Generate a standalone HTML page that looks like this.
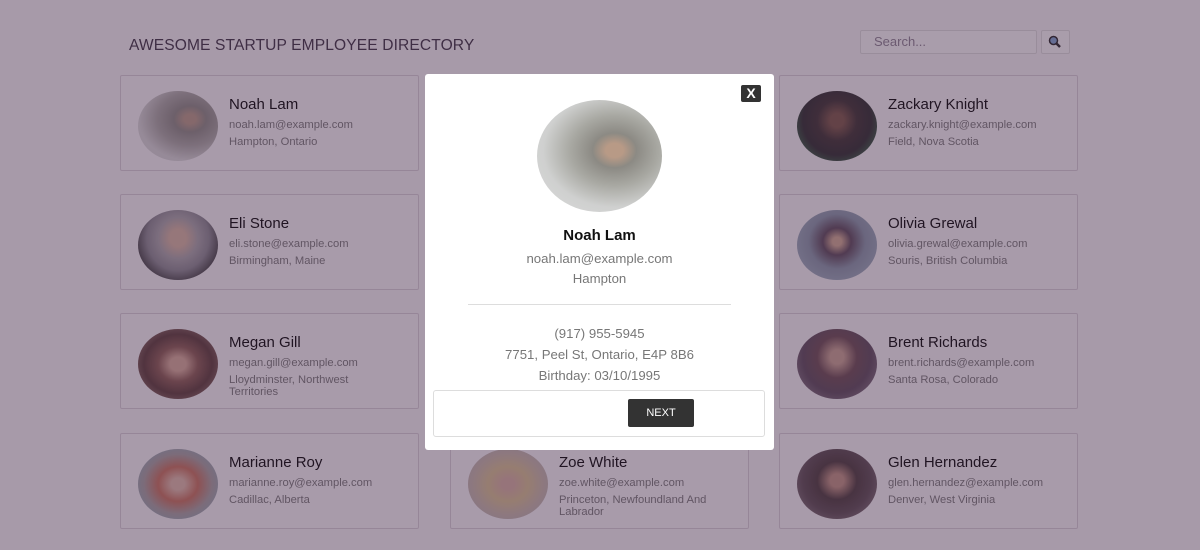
<!DOCTYPE html>
<html><head><style>
body{margin:0;width:1200px;height:550px;background:#f6f4f6;font-family:"Liberation Sans",sans-serif;position:relative;overflow:hidden}
h1{position:absolute;left:129px;top:37px;margin:0;font-size:15.6px;font-weight:normal;color:#3a3040;letter-spacing:0.1px}
.search{position:absolute;left:860px;top:30px;width:177px;height:24px;border:1px solid #ddd;background:#fafafa;border-radius:2px;color:#8a8090;font-size:13px;line-height:22px;padding-left:13px;box-sizing:border-box}
.sbtn{position:absolute;left:1041px;top:30px;width:29px;height:24px;border:1px solid #ddd;background:#fafafa;border-radius:2px;box-sizing:border-box}
.card{position:absolute;width:299px;height:96px;border:1px solid #d8d0d8;box-sizing:border-box;border-radius:2px;background:#f8f6f8}
.av{position:absolute;left:17px;top:15px;width:80px;height:70px;border-radius:50%}
.n{position:absolute;left:108px;top:20px;font-size:15px;color:#000}
.e{position:absolute;left:108px;top:43px;font-size:11.2px;color:#777;line-height:12px;width:160px}
.l{position:absolute;left:108px;top:60px;font-size:11.2px;color:#777;line-height:12px;width:160px}
.ov{position:absolute;left:0;top:0;width:1200px;height:550px;background:rgba(70,45,75,0.45)}
.modal{position:absolute;left:425px;top:74px;width:349px;height:376px;background:#fff;border-radius:3px}
.x{position:absolute;left:316px;top:11px;width:20px;height:17px;background:#333;color:#fff;border-radius:2px;font-weight:bold;font-size:14px;text-align:center;line-height:17px}
.mav{position:absolute;left:112px;top:26px;width:125px;height:112px;border-radius:50%;background:radial-gradient(ellipse at 62% 45%,#b89a86 0 8%,#8c8a84 20%,#a8a8a2 40%,#cfd0cf 65%,#dcdcdc)}
.c{position:absolute;left:0;width:349px;text-align:center;font-size:13.2px;color:#777}
.foot{position:absolute;left:8px;top:316px;width:332px;height:47px;border:1px solid #ddd;border-radius:3px;box-sizing:border-box}
.next{position:absolute;left:194px;top:8px;width:66px;height:28px;background:#333;border-radius:2px;color:#fff;font-size:11px;text-align:center;line-height:28px}
</style></head><body>
<h1>AWESOME STARTUP EMPLOYEE DIRECTORY</h1>
<div class="search">Search...</div>
<div class="sbtn"><svg width="27" height="22" viewBox="0 0 27 22"><circle cx="11.5" cy="9.5" r="4" fill="#7fa3d0" stroke="#222" stroke-width="1.5"/><line x1="14.5" y1="12.5" x2="18" y2="16" stroke="#222" stroke-width="2.5"/></svg></div>

<div class="card" style="left:120px;top:75px"><div class="av" style="background:radial-gradient(ellipse at 65% 40%,#b89a86 0 8%,#8c8a84 22%,#aaa8a4 45%,#d8d8d8 70%)"></div><div class="n">Noah Lam</div><div class="e">noah.lam@example.com</div><div class="l">Hampton, Ontario</div></div>
<div class="card" style="left:779px;top:75px"><div class="av" style="background:radial-gradient(ellipse at 50% 42%,#7a5444 0 12%,#3a302e 35%,#2a2a2a 60%,#3a6e4a 85%)"></div><div class="n">Zackary Knight</div><div class="e">zackary.knight@example.com</div><div class="l">Field, Nova Scotia</div></div>
<div class="card" style="left:120px;top:194px"><div class="av" style="background:radial-gradient(ellipse at 50% 40%,#d8b4a0 0 14%,#a8a4a8 35%,#8a8890 55%,#333 80%)"></div><div class="n">Eli Stone</div><div class="e">eli.stone@example.com</div><div class="l">Birmingham, Maine</div></div>
<div class="card" style="left:779px;top:194px"><div class="av" style="background:radial-gradient(ellipse at 50% 45%,#d0a890 0 8%,#5a4858 25%,#8896a8 50%,#9cacbc 80%)"></div><div class="n">Olivia Grewal</div><div class="e">olivia.grewal@example.com</div><div class="l">Souris, British Columbia</div></div>
<div class="card" style="left:120px;top:313px"><div class="av" style="background:radial-gradient(ellipse at 50% 50%,#d8aa98 0 14%,#8a5a50 35%,#5a3a36 60%,#9a7a72 90%)"></div><div class="n">Megan Gill</div><div class="e">megan.gill@example.com</div><div class="l">Lloydminster, Northwest Territories</div></div>
<div class="card" style="left:779px;top:313px"><div class="av" style="background:radial-gradient(ellipse at 50% 40%,#c8a090 0 12%,#6a4a50 35%,#5a4858 60%,#8a7a88 90%)"></div><div class="n">Brent Richards</div><div class="e">brent.richards@example.com</div><div class="l">Santa Rosa, Colorado</div></div>
<div class="card" style="left:120px;top:433px"><div class="av" style="background:radial-gradient(ellipse at 50% 50%,#e0b8a8 0 12%,#c8705a 35%,#a8a0a0 60%,#8ab0c0 90%)"></div><div class="n">Marianne Roy</div><div class="e">marianne.roy@example.com</div><div class="l">Cadillac, Alberta</div></div>
<div class="card" style="left:450px;top:433px"><div class="av" style="background:radial-gradient(ellipse at 50% 50%,#d8b0a0 0 12%,#d8c090 35%,#c8b8a8 60%,#b8b0b8 90%)"></div><div class="n">Zoe White</div><div class="e">zoe.white@example.com</div><div class="l">Princeton, Newfoundland And Labrador</div></div>
<div class="card" style="left:779px;top:433px"><div class="av" style="background:radial-gradient(ellipse at 50% 45%,#c09080 0 12%,#4a3a3a 35%,#5a4a50 60%,#8a7a80 90%)"></div><div class="n">Glen Hernandez</div><div class="e">glen.hernandez@example.com</div><div class="l">Denver, West Virginia</div></div>

<div class="ov"></div>
<div class="modal">
<div class="x">X</div>
<div class="mav"></div>
<div class="c" style="top:153px;font-size:15px;font-weight:bold;color:#111">Noah Lam</div>
<div class="c" style="top:177px">noah.lam@example.com</div>
<div class="c" style="top:197px">Hampton</div>
<div style="position:absolute;left:43px;top:230px;width:263px;border-top:1px solid #ddd"></div>
<div class="c" style="top:252px">(917) 955-5945</div>
<div class="c" style="top:273px">7751, Peel St, Ontario, E4P 8B6</div>
<div class="c" style="top:294px">Birthday: 03/10/1995</div>
<div class="foot"><div class="next">NEXT</div></div>
</div>
</body></html>
